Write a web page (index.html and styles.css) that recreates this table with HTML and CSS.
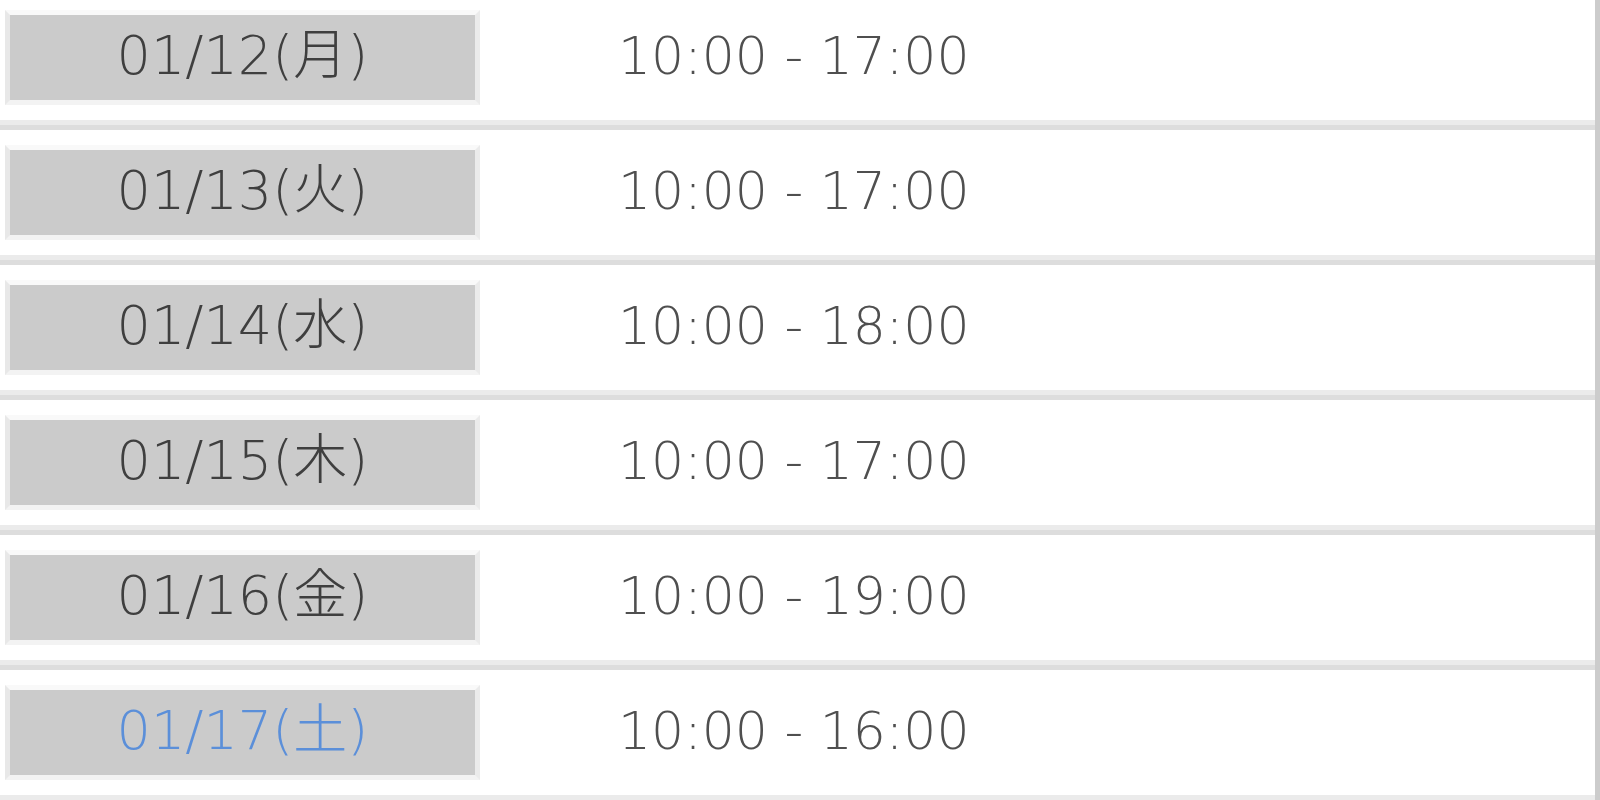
FILE: index.html
```html
<!DOCTYPE html>
<html lang="ja">
<head>
<meta charset="utf-8">
<title>営業時間</title>
<link rel="stylesheet" href="styles.css">
</head>
<body>
<ul class="schedule">
  <li class="row"><span class="date">01/12(月)</span><span class="time">10:00 - 17:00</span></li>
  <li class="row"><span class="date">01/13(火)</span><span class="time">10:00 - 17:00</span></li>
  <li class="row"><span class="date">01/14(水)</span><span class="time">10:00 - 18:00</span></li>
  <li class="row"><span class="date">01/15(木)</span><span class="time">10:00 - 17:00</span></li>
  <li class="row"><span class="date">01/16(金)</span><span class="time">10:00 - 19:00</span></li>
  <li class="row"><span class="date date-sat">01/17(土)</span><span class="time">10:00 - 16:00</span></li>
</ul>
</body>
</html>
```
FILE: styles.css
```css
html, body {
  margin: 0;
  padding: 0;
  background: #ffffff;
  overflow: hidden;
}
body {
  font-family: "DejaVu Sans", "Noto Sans CJK JP", sans-serif;
  font-weight: 200;
}
.schedule {
  list-style: none;
  margin: -5px 0 0;
  padding: 0;
  border-right: 5px solid #cccccc;
  height: 810px;
  box-sizing: border-box;
}
.row {
  display: flex;
  align-items: center;
  height: 135px;
  box-sizing: border-box;
  padding: 15px 0 20px 5px;
  border-bottom: 5px solid #dddddd;
  box-shadow: inset 0 -5px 0 #ebebeb;
}
.date {
  width: 465px;
  height: 85px;
  line-height: 82px;
  background: #cbcbcb;
  border-style: solid;
  border-width: 5px;
  border-color: #f9f9f9 #ebebeb #f3f3f3 #e8e8e8;
  text-align: center;
  font-size: 54px;
  color: #3f3f3f;
}
.date-sat {
  color: #5b8fd9;
}
.time {
  margin-left: 138px;
  margin-bottom: 3px;
  font-size: 52px;
  color: #4f4f4f;
}
```
